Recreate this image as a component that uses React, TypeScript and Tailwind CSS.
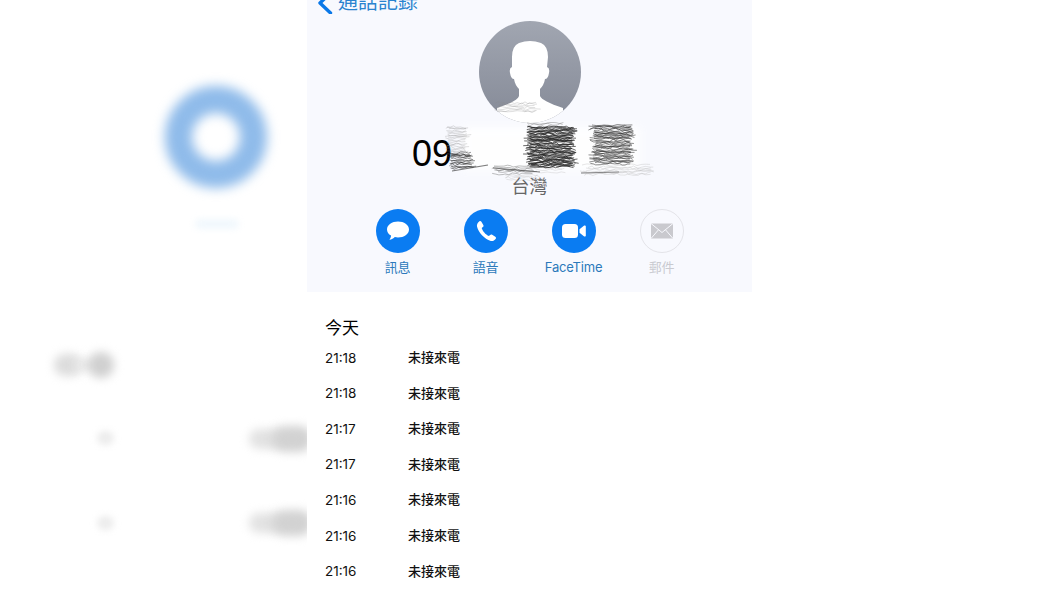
import type { ReactNode } from "react";

const calls = ["21:18", "21:18", "21:17", "21:17", "21:16", "21:16", "21:16"];
const font = { fontFamily: '"Inter", "Noto Sans CJK TC", sans-serif' };

// seeded random so the scribble is the same on every load
function rng(seed: number) {
  let s = seed;
  return () => {
    s = (s * 16807) % 2147483647;
    return s / 2147483647;
  };
}

// pencil-like strokes: wobbly lines going back and forth over a box
function scribble(x: number, y: number, w: number, h: number, step: number, seed: number) {
  const r = rng(seed);
  let d = "";
  let dir = 1;
  for (let yy = y; yy < y + h; yy += step * (0.5 + r())) {
    const x1 = x + r() * w * 0.1;
    const x2 = x + w - r() * w * 0.1;
    let px = dir > 0 ? x1 : x2;
    const end = dir > 0 ? x2 : x1;
    let py = yy;
    d += `M${px.toFixed(1)} ${py.toFixed(1)}`;
    while (dir > 0 ? px < end : px > end) {
      px += dir * (2 + r() * 4);
      py = yy + (r() - 0.5) * 2.6;
      d += `L${px.toFixed(1)} ${py.toFixed(1)}`;
    }
    dir = -dir;
  }
  return d;
}

function Redaction() {
  return (
    <svg className="absolute left-[123px] top-[95px]" width="240" height="90" viewBox="430 95 240 90">
      <defs>
        <filter id="wash" x="-20%" y="-20%" width="140%" height="140%">
          <feGaussianBlur stdDeviation="4" />
        </filter>
        <filter id="soft">
          <feGaussianBlur stdDeviation="0.45" />
        </filter>
      </defs>
      <path d="M462 127H640V170H462Z" fill="#fff" opacity="0.9" filter="url(#wash)" />
      <g fill="none" filter="url(#soft)">
        <path d={scribble(495, 103, 42, 10, 1.3, 11)} stroke="#8a8a8a" strokeWidth="0.5" opacity="0.55" />
        <path d={scribble(447, 127, 20, 28, 1.5, 23)} stroke="#888" strokeWidth="0.7" opacity="0.4" />
        <path d={scribble(450, 153, 22, 15, 1.1, 37)} stroke="#222" strokeWidth="0.8" opacity="0.65" />
        <path d={scribble(527, 123, 36, 4, 1.2, 41)} stroke="#777" strokeWidth="0.7" opacity="0.6" />
        <path d={scribble(527, 127, 48, 40, 0.7, 53)} stroke="#222" strokeWidth="0.9" opacity="0.75" />
        <path d={scribble(592, 125, 41, 39, 0.9, 67)} stroke="#2a2a2a" strokeWidth="0.8" opacity="0.66" />
        <path d="M452 171L488 165M493 168L540 172M581 173L619 172" stroke="#333" strokeWidth="1.2" opacity="0.65" />
        <path d={scribble(494, 166, 42, 8, 1.3, 71)} stroke="#555" strokeWidth="0.7" opacity="0.55" />
        <path d={scribble(535, 168, 30, 6, 1.8, 79)} stroke="#aaa" strokeWidth="0.6" opacity="0.45" />
        <path d={scribble(582, 165, 72, 11, 1.6, 83)} stroke="#aaa" strokeWidth="0.6" opacity="0.5" />
        <path d={scribble(505, 175, 35, 5, 1.6, 97)} stroke="#aaa" strokeWidth="0.6" opacity="0.45" />
      </g>
    </svg>
  );
}

function Avatar() {
  return (
    <div className="h-[102px] w-[102px] overflow-hidden rounded-full bg-gradient-to-b from-[#a1a6b1] to-[#858a97]">
      <svg viewBox="0 0 102 102" className="h-full w-full">
        <path
          d="M40 22Q51 18 62 22Q69 25 69 36L68 46Q71 47 70 52Q69 58 66 58Q65 64 61 68L61 75Q63 80 84 87V102H18V87Q39 80 40 75L40 68Q36 64 35 58Q32 58 31 52Q30 47 33 46L33 36Q33 25 40 22Z"
          fill="#fff"
        />
      </svg>
    </div>
  );
}

function Action({ label, disabled, children }: { label: string; disabled?: boolean; children: ReactNode }) {
  return (
    <div className="flex w-[88px] flex-col items-center">
      <div
        className={
          disabled
            ? "flex h-[44px] w-[44px] items-center justify-center rounded-full border border-[#e4e4e9]"
            : "flex h-[44px] w-[44px] items-center justify-center rounded-full bg-[#0a7cf2]"
        }
      >
        {children}
      </div>
      <span
        className={
          disabled
            ? "mt-[5px] text-[13px] leading-[18px] tracking-[-0.2px] text-[#c9cad0]"
            : "mt-[5px] text-[13px] leading-[18px] tracking-[-0.2px] text-[#2c79bb]"
        }
      >
        {label}
      </span>
    </div>
  );
}

function BubbleIcon() {
  return (
    <svg width="24" height="22" viewBox="0 0 24 22">
      <path
        d="M12 1.5C18 1.5 23 5 23 9.5S18 17.5 12 17.5C10.8 17.5 9.8 17.4 8.8 17.1C7.6 18.4 5.6 19.6 3.4 19.8C4.4 18.6 5 17.2 5 15.6C2.5 14.2 1 12 1 9.5 1 5 6 1.5 12 1.5Z"
        fill="#fff"
      />
    </svg>
  );
}

function HandsetIcon() {
  return (
    <svg width="24" height="24" viewBox="0 0 24 24">
      <path
        d="M5.2 2.4C6 1.9 6.9 2 7.4 2.8L9.3 6C9.7 6.8 9.5 7.6 8.9 8.1L7.7 9C8.4 11.9 11.6 15.6 14.9 17.1L16.1 15.9C16.7 15.3 17.5 15.2 18.2 15.7L21.3 17.7C22.1 18.3 22.2 19.2 21.6 20C20.4 21.5 18.7 22.4 16.8 21.9C10.4 20.2 4.4 13.6 3 7.6 2.6 5.5 3.6 3.6 5.2 2.4Z"
        fill="#fff"
      />
    </svg>
  );
}

function CameraIcon() {
  return (
    <svg width="26" height="18" viewBox="0 0 26 18">
      <rect x="1" y="2" width="16" height="14" rx="3.5" fill="#fff" />
      <path d="M18.5 7.2L23.2 3.6C24 3.1 24.8 3.5 24.8 4.4V13.6C24.8 14.5 24 14.9 23.2 14.4L18.5 10.8Z" fill="#fff" />
    </svg>
  );
}

function EnvelopeIcon() {
  return (
    <svg width="24" height="18" viewBox="0 0 24 18">
      <rect x="1" y="1.5" width="22" height="15" fill="#c9c9ce" />
      <path d="M1 1.5L12 10.5L23 1.5M1 16.5L8.5 7.8M23 16.5L15.5 7.8" stroke="#f8f9fe" strokeWidth="1" fill="none" />
    </svg>
  );
}

export default function App() {
  return (
    <div className="flex h-[596px] w-[1060px] overflow-hidden bg-white" style={font}>
      {/* blurred backdrop on the left */}
      <div className="relative w-[307px] shrink-0 overflow-hidden">
        <div className="absolute left-[165px] top-[86px] h-[102px] w-[102px] rounded-full border-[27px] border-[#8fbbea] blur-[6px]" />
        <div className="absolute left-[195px] top-[219px] h-[10px] w-[44px] rounded-full bg-[#f1f8fd] blur-[3px]" />
        <div className="absolute left-[54px] top-[354px] h-[22px] w-[28px] rounded-full bg-[#dcdcdc] blur-[5px]" />
        <div className="absolute left-[74px] top-[360px] h-[10px] w-[20px] bg-[#e8e8e8] blur-[4px]" />
        <div className="absolute left-[88px] top-[352px] h-[26px] w-[26px] rounded-full bg-[#d0d0d0] blur-[5px]" />
        <div className="absolute left-[97px] top-[431px] h-[14px] w-[17px] rounded-full bg-[#ededed] blur-[3px]" />
        <div className="absolute left-[97px] top-[516px] h-[14px] w-[17px] rounded-full bg-[#ededed] blur-[3px]" />
        <div className="absolute left-[249px] top-[429px] h-[20px] w-[34px] rounded-full bg-[#e2e2e2] blur-[5px]" />
        <div className="absolute left-[272px] top-[426px] h-[26px] w-[40px] rounded-full bg-[#d2d2d2] blur-[5px]" />
        <div className="absolute left-[249px] top-[513px] h-[20px] w-[34px] rounded-full bg-[#e2e2e2] blur-[5px]" />
        <div className="absolute left-[272px] top-[510px] h-[26px] w-[40px] rounded-full bg-[#d2d2d2] blur-[5px]" />
      </div>

      <div className="relative w-[445px] shrink-0">
        <div className="flex h-[292px] flex-col items-center overflow-hidden bg-[#f8f9fe]">
          <div className="-mt-[10px] flex h-[24px] w-full items-center gap-[5px] pl-[10px] text-[#2a83cf]">
            <svg width="16" height="24" viewBox="0 0 16 24" className="shrink-0">
              <path d="M13.5 3L3 13L13.5 23" stroke="#0a78e8" strokeWidth="3.4" strokeLinecap="round" strokeLinejoin="round" fill="none" />
            </svg>
            <span className="text-[20px] leading-[24px]">通話記錄</span>
          </div>
          <div className="mt-[7px]">
            <Avatar />
          </div>
          <div
            className="mt-[11px] h-[40px] w-full pl-[105px] text-[36px] leading-[40px] text-black"
            style={{ fontFamily: '"Liberation Sans", sans-serif' }}
          >
            09
          </div>
          <div className="mt-[1px] text-[18px] leading-[24px] text-[#666]">台灣</div>
          <div className="mt-[10px] flex">
            <Action label="訊息">
              <BubbleIcon />
            </Action>
            <Action label="語音">
              <HandsetIcon />
            </Action>
            <Action label="FaceTime">
              <CameraIcon />
            </Action>
            <Action label="郵件" disabled>
              <EnvelopeIcon />
            </Action>
          </div>
        </div>

        <div className="pl-[18px] pt-[25px]">
          <div className="mb-[1px] text-[17px] leading-[22px] text-black">今天</div>
          {calls.map((time, i) => (
            <div key={i} className="flex h-[35.6px] items-center text-[#111]">
              <span className="w-[83px] text-[13.5px]">{time}</span>
              <span className="text-[13px] font-medium">未接來電</span>
            </div>
          ))}
        </div>

        <Redaction />
      </div>

      <div className="flex-1" />
    </div>
  );
}
